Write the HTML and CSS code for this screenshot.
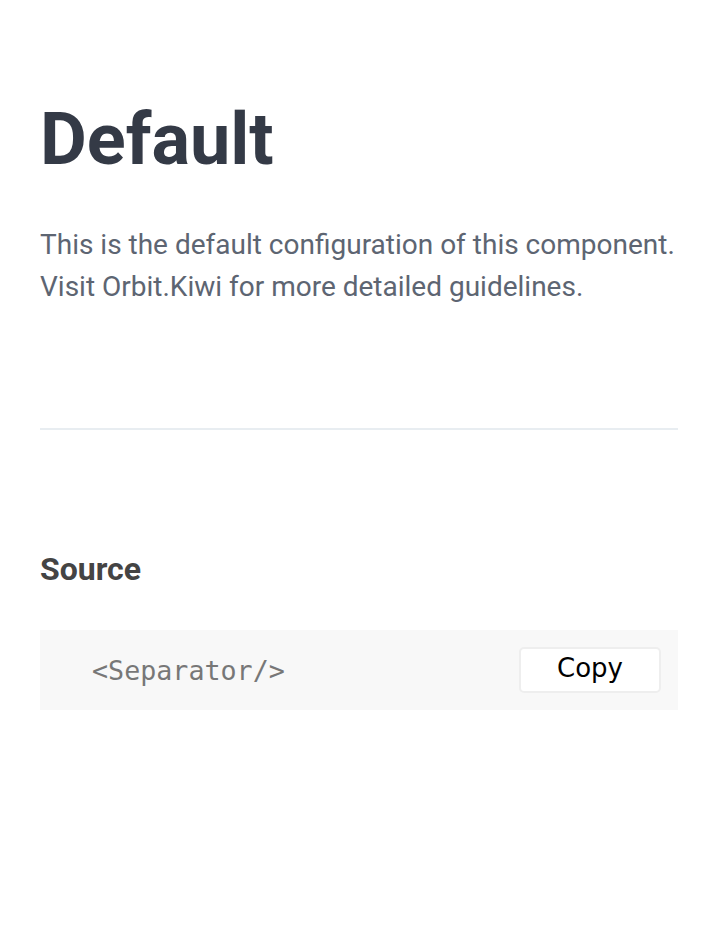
FILE: index.html
```html
<!DOCTYPE html>
<html lang="en">
<head>
<meta charset="utf-8">
<title>Default</title>
<link rel="stylesheet" href="styles.css">
</head>
<body>
<main class="docs">
  <h1 class="title">Default</h1>
  <p class="lead">This is the default configuration of this component. Visit Orbit.Kiwi for more detailed guidelines.</p>
  <hr class="separator">
  <h2 class="source-title">Source</h2>
  <div class="code-block">
    <code class="code">&lt;Separator/&gt;</code>
    <button class="copy-btn" type="button">Copy</button>
  </div>
</main>
</body>
</html>
```
FILE: styles.css
```css
html, body {
  margin: 0;
  padding: 0;
  background: #ffffff;
}

.docs {
  padding: 104px 40px 40px 40px;
  font-family: Roboto, "Liberation Sans", sans-serif;
}

.title {
  margin: 0;
  font-size: 72px;
  line-height: 72px;
  font-weight: 700;
  color: #343a46;
}

.lead {
  margin: 48px 0 0 0;
  font-size: 28px;
  line-height: 42px;
  font-weight: 400;
  color: #5d6572;
}

.separator {
  margin: 120px 0 0 0;
  border: 0;
  height: 2px;
  background: #e8edf1;
}

.source-title {
  margin: 119px 0 0 0;
  font-size: 32px;
  line-height: 40px;
  font-weight: 700;
  color: #444444;
}

.code-block {
  margin-top: 41px;
  height: 80px;
  background: #f8f8f8;
  display: flex;
  align-items: center;
  justify-content: space-between;
  padding: 0 17px 0 52px;
}

.code {
  font-family: "DejaVu Sans Mono", monospace;
  font-size: 26.7px;
  color: #777777;
}

.copy-btn {
  width: 142px;
  height: 46px;
  background: #ffffff;
  border: 2px solid #eeeeee;
  border-radius: 5px;
  font-family: "DejaVu Sans", sans-serif;
  font-size: 26px;
  color: #000000;
  padding: 0 0 4px 0;
  cursor: pointer;
}
```
